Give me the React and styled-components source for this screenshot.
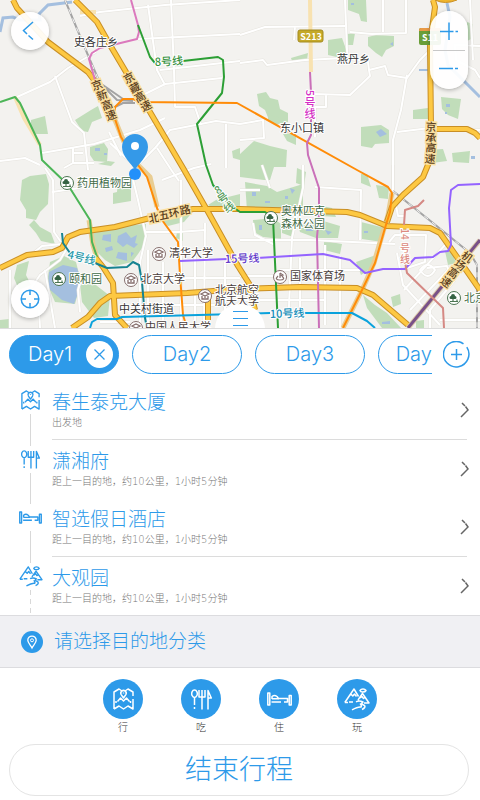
import styled, { createGlobalStyle } from 'styled-components'
import { useState } from 'react'

const GlobalStyle = createGlobalStyle`
    * {
        box-sizing: border-box;
    }
    body {
        margin: 0;
        background: #ffffff;
        font-family: Inter, 'Noto Sans CJK SC', sans-serif;
        font-weight: 300;
    }
    button {
        font: inherit;
        color: inherit;
        padding: 0;
        border: none;
        background: none;
        cursor: pointer;
    }
`

const blue = '#2d9ae9'

const Page = styled.main`
    display: flex;
    flex-direction: column;
    color: ${blue};
`

const MapArea = styled.section`
    position: relative;
    height: 329px;
    overflow: hidden;
    border-bottom: 1px solid #dcdcdc;
`

const MapSvg = styled.svg`
    display: block;
    width: 100%;
    height: 100%;
    font-family: 'Noto Sans CJK SC', sans-serif;
    font-weight: 400;
`

const RoundButton = styled.button`
    position: absolute;
    left: 11px;
    top: ${props => props.$low ? '280px' : '12px'};
    display: flex;
    align-items: center;
    justify-content: center;
    width: 38px;
    height: 38px;
    border-radius: 50%;
    background: rgba(255, 255, 255, 0.93);
    box-shadow: 0 1px 4px rgba(0, 0, 0, 0.3);
`

const ZoomControl = styled.div`
    position: absolute;
    right: 12px;
    top: 11px;
    display: flex;
    flex-direction: column;
    width: 38px;
    height: 78px;
    border-radius: 19px;
    background: rgba(255, 255, 255, 0.93);
    box-shadow: 0 1px 4px rgba(0, 0, 0, 0.3);
`

const ZoomButton = styled.button`
    flex: 1;
    display: flex;
    align-items: center;
    justify-content: center;
    margin: 0 3px;
    & + & {
        border-top: 1px solid #c8c8c8;
    }
`

const Handle = styled.button`
    position: absolute;
    left: 50%;
    bottom: -1px;
    transform: translateX(-50%);
    display: flex;
    flex-direction: column;
    align-items: center;
    gap: 6px;
    width: 50px;
    height: 25px;
    padding-top: 7px;
    border-radius: 25px 25px 0 0;
    background: #ffffff;
`

const HandleLine = styled.span`
    width: 15px;
    height: 1px;
    background: ${blue};
`

const DayBar = styled.nav`
    display: flex;
    align-items: center;
    gap: 11px;
    padding: 6px 10px 7px 9px;
`

const DayScroller = styled.div`
    display: flex;
    flex: 1;
    gap: 13px;
    min-width: 0;
    overflow: hidden;
`

const DayPill = styled.div`
    flex: none;
    display: flex;
    align-items: center;
    justify-content: space-between;
    width: 110px;
    height: 39px;
    padding: ${props => props.$active ? '0 5px 0 18px' : '0'};
    border: 1px solid ${blue};
    border-radius: 20px;
    background: ${props => props.$active ? blue : '#ffffff'};
    color: ${props => props.$active ? '#ffffff' : blue};
    &:nth-child(n + 4) {
        width: 84px;
    }
`

const DayButton = styled.button`
    flex: ${props => props.$active ? 'none' : '1'};
    font-size: 20px;
    line-height: 37px;
`

const CloseButton = styled.button`
    flex: none;
    display: flex;
    align-items: center;
    justify-content: center;
    width: 27px;
    height: 27px;
    border-radius: 50%;
    background: #ffffff;
    color: ${blue};
`

const AddButton = styled.button`
    display: flex;
`

const StopList = styled.ol`
    margin: 0;
    padding: 0 13px 0 9px;
    list-style: none;
`

const Stop = styled.li`
    display: flex;
`

const Rail = styled.div`
    display: flex;
    flex-direction: column;
    align-items: center;
    width: 43px;
    padding-top: 9px;
`

const RailIcon = styled.div`
    display: flex;
    align-items: center;
    justify-content: center;
    height: 20px;
`

const RailLine = styled.div`
    flex: 1;
    width: 1px;
    margin: 4px 0 ${props => props.$last ? '0' : '-6px'};
    background: ${props => props.$last
        ? 'repeating-linear-gradient(#d8d8d8 0 5px, transparent 5px 9px)'
        : '#d8d8d8'};
`

const StopBody = styled.a`
    flex: 1;
    display: flex;
    align-items: center;
    justify-content: space-between;
    height: ${props => props.$line ? '59px' : '58px'};
    border-bottom: ${props => props.$line ? '1px solid #dcdcdc' : 'none'};
    color: inherit;
    text-decoration: none;
`

const StopTitle = styled.div`
    font-size: 19px;
    line-height: 25px;
`

const StopNote = styled.div`
    font-family: 'DejaVu Sans', 'Noto Sans CJK SC', sans-serif;
    font-size: 10px;
    line-height: 16px;
    color: #777777;
`

const Chevron = styled.svg`
    flex: none;
    margin-right: -2px;
`

const PickBar = styled.div`
    display: flex;
    align-items: center;
    gap: 11px;
    height: 53px;
    padding: 0 21px;
    border-top: 1px solid #dcdcdf;
    border-bottom: 1px solid #dcdcdf;
    background: #f0f0f3;
`

const PickTitle = styled.h2`
    margin: 0;
    font-size: 19px;
    line-height: 25px;
    font-weight: 300;
`

const Categories = styled.div`
    display: flex;
    justify-content: center;
    gap: 38px;
    padding: 11px 0 9px;
`

const Category = styled.button`
    display: flex;
    flex-direction: column;
    align-items: center;
    font-size: 10px;
    line-height: 16px;
    color: #333333;
`

const CategoryIcon = styled.span`
    display: flex;
    align-items: center;
    justify-content: center;
    width: 40px;
    height: 40px;
    border-radius: 50%;
    background: ${blue};
    color: #ffffff;
`

const FinishButton = styled.button`
    height: 52px;
    margin: 0 11px 4px 9px;
    border: 1px solid #e4e4e4;
    border-radius: 26px;
    font-size: 27px;
    line-height: 50px;
`

const icons = {
    go: {
        w: 21, h: 22,
        d: 'M1 21V4L6 1l3 2M12 3l3-2 5 3v4M20 11v10l-5-3-4.500 3L6 18l-5 3M10.500 10L8.200 6.600a2.700 2.700 0 1 1 4.600 0zM10.500 4.600v1M4.500 13.500l3-3.500 3 3 3-3 3 3.500M3 13v2M17.500 13v2',
    },
    eat: {
        w: 21, h: 21,
        d: 'M3.500 1a2.800 3.700 0 1 0 .01 0M3.500 9v7M3.500 18v2M8 1v7h6V1M11 1v19.500M17 20.500V1.500L20.300 9H17',
    },
    stay: {
        w: 25, h: 14,
        d: 'M.8 1h2v12h-2zM22.200 3.500h2V13h-2zM5 7V4.500q2.500-2 5 0l1.500 2h9V10H17M5 6.800h7M4.500 10h9.500',
    },
    play: {
        w: 26, h: 23,
        d: 'M.8 14.500L10 1l4.500 7.500M.8 14.500H4M5 14h4M6.800 6l2 2L10.500 6l2 2.500M19 1q2 0 3 1.500-1 1.700-3.500 1.500-2 0-2.500-1.500Q17 1 19 1M14 12L18.500 5.500 25 15h-5M16 10l2-1.500 1.500 2 2-1.500M12 13.800q3-1.500 7 .2-3 1.500 1.500 3.500 1.500 2-2.500 4M16 15.500q2 2 1 3.500-3-.5-9 2.800',
    },
}

const TravelIcon = ({name, small}) => {
    const { w, h, d } = icons[name]
    const scale = small ? 0.92 : 1
    return <svg width={Math.round(w * scale)} height={Math.round(h * scale)} viewBox={`0 0 ${w} ${h}`} fill="none"
        stroke="currentColor" strokeWidth="1.500" strokeLinejoin="round" aria-hidden="true">
        <path d={d}/>
    </svg>
}

const parks = [
    'M31 120l14-4 3 18-14 0-3-8z',
    'M75 120l16-10 7-4 4 12-10 4-4 10-6-1z',
    'M90 147l14-4 4 6-1 13-13-1-4-6z',
    'M98 164l10-3 7 1-4 4z',
    'M232 151l8-3v12l-7-2z',
    'M22 180l8-4 16-2 3 10-1 20-8 8-4 8-10-2 0-8-6-10z',
    'M29 225l5-5 6 7 11 6 4 11-14-3-5-8z',
    'M118 180l6 8 7-2 0 15-18 3 0-11 4-1z',
    'M92 232l28-6 26-2 0 18-8 12-6 8-17 4-10-6-10-10z',
    'M17 265l12-4-3 14 5 10-12 5-5-12z',
    'M50 262l14-6 12 6 5 20-6 22-20-2-8-18z',
    'M80 285l12-3 18 14-2 20-14 2-12-16z',
    'M0 320l9-1v9H0z',
    'M160 219l14-8 16 4-6 7-16 4z',
    'M177 232l6-1 0 10-7-3z',
    'M208 205l8-5 24-6v18l-22-2z',
    'M348 0h18l1 22-6-1-2-7-11-4z',
    'M328 40l14-2 5 14-2 7-17-4z',
    'M347 34l8-1-2 12-5 0z',
    'M368 37l8-2 18 1 0 10-8 4-4 7-6-4-8-7z',
    'M291 58l17-5-1 7-15 1z',
    'M257 94l9-2 4 6 8 2 2 9 8 4v9l-13 3-6-5-4-10-6-4z',
    'M268 115l10 2 2 6-12-3z',
    'M361 127l20-2 8 5 0 13-14 1-3 4-11-2z',
    'M441 97l20 2-3 20-10-4-6-6z',
    'M413 110l15-2 0 11-15 0z',
    'M467 22l6 2v14l-6 3z',
    'M428 150l15-1 4 12-15 2z',
    'M452 153l18-2-1 12-16-1z',
    'M240 154l14-13 16 5 17 4-1 17-12 0-4 13-6 0-24-3z',
    'M283 134l13-1v12l-9-4z',
    'M245 182l22 4 10 6 26-8 0 24-9 6-14-4-10 2-23-1z',
    'M297 168l9 4-2 14-8-3z',
    'M361 174l6 0 4 13-10-4z',
    'M376 185l13 2-1 12-9-1z',
    'M322 206l10 2 4 9-14-1z',
    'M253 220l20-2 8 6 0 15-18-2-9-5z',
    'M282 217l12 4-1 16-11-4z',
    'M298 225l22-5 20 6-2 12-22 0-16-6z',
    'M361 222l24 6-3 14-20-3z',
    'M324 241l18 3-2 10-16-4z',
    'M356 262l20-7-3 12-12 8z',
    'M363 295l12 10 12 8 14 15H382l-15-20z',
    'M445 251l6-2 5 14-8 2z',
    'M391 297l9-3 1 10-8 3z',
    'M416 321l8-1v8h-8z',
]

const waters = [
    'M49 272l14-7 14 3 5 14-8 22-12-4-14-12z',
    'M103 235l8-1 0 8-9-2zM118 236l8-4 5 6 6-3-2 8 3 1-4 4-7-4-4 3-6-5zM105 248l7-2 1 4-7 2zM118 252l9 1 0 8-11-3zM131 252l3 1-3 4z',
    'M95 148h5v3h-5zM104 153h3v2h-3zM376 132l5-3 6 5-7 3zM390 44l3-2 0 4zM351 3h3v2h-3zM446 104h4v3h-4zM445 112h2v2h-2z',
    'M252 192h4v4h-4zM265 201h5v2h-5zM290 188l5 2-3 4zM285 196h3v3h-3zM306 229h7v2h-7zM325 230l7 2-4 3zM364 231h4v2h-4zM259 225h3v5h-3z',
    'M419 69h10v2h-10zM471 156h4v3h-4zM382 322l8-1v3h-8z',
]

const minorRoads = [
    'M80 16L100 12 165 5 240 0', 'M148 5L157 70 165 85', 'M171 0L174 70 175 107', 'M138 39L240 34', 'M160 70L240 61',
    'M17 97L50 82 68 68 96 52', 'M55 76L72 122 84 133 88 170', 'M143 95L165 84 222 78', 'M175 107h20l6 18',
    'M42 153L94 144 140 130 165 118', 'M110 143L125 157 138 167', 'M109 132L121 156', 'M73 148L73 163 64 168',
    'M0 161L25 158 40 165', 'M83 153h-10M72 163h22', 'M137 166L155 148 170 130 216 121 240 124', 'M157 148l15 23 7 10',
    'M226 124v44', 'M45 168L53 180 54 232 61 242', 'M162 180l32-12 17-4', 'M52 192l28-4', 'M131 171L138 200 146 236 140 262 140 328',
    'M146 232h32l28-2', 'M181 180v160', 'M205 223L204 328', 'M30 290L40 275 60 260 66 250', 'M27 258l15-12 20-2', 'M100 283L82 276 78 290 80 312',
    'M240 35L265 27 345 26M295 26l-1 14', 'M345 0L347 50 348 60', 'M383 0v32', 'M406 0v33L372 34 350 32', 'M240 63L263 60 267 65 305 60 345 58',
    'M345 58L368 62 369 70 385 66 388 75 407 78 420 60 430 50', 'M369 70L370 76 350 95 313 94M326 94v13h-11v30', 'M407 75L401 110 393 140 393 200',
    'M397 132L430 128 480 130', 'M240 124L263 120 264 138 240 140', 'M315 187L361 190 360 240', 'M303 165V188L292 238 288 328', 'M240 240L310 240 395 244',
    'M262 165L270 188M240 190l20 0', 'M253 223L255 235 275 245', 'M240 300L325 300M240 276h40M280 270h80', 'M300 258v70M340 256v72M325 245v80',
    'M389 242L395 235H426L425 262 404 269', 'M393 190V165M395 200L398 216 404 216', 'M397 253L403 285 440 325', 'M404 290L445 245', 'M410 310L450 268',
    'M420 270q8-10 15 0q-7 12-15 0zM427 268l20-2 6 15-16 12', 'M440 320h40', 'M455 280L430 310 430 328', 'M470 0L473 60M480 46L455 45 456 60 475 70 480 78',
    'M148 250v78M163 262V328M195 255V328M225 262V328', 'M145 278h95M150 305h86M100 322h30', 'M10 270V328M38 290l2 38M45 270l10 58',
]

const highways = [
    'M13 0L17 8 48 42 88 72 97 84 115 120',
    'M75 0L97 22 110 45 126 72 150 112 183 168 207 210 238 266 250 285',
    'M0 268L27 255 53 252 62 248 68 237 80 232 115 227 150 218 193 209 240 209 347 212 360 215 387 226 430 228 440 233 457 257 480 290',
    'M72 328L88 317 100 303 110 296 187 293 240 289 300 287 357 288 373 295 408 325',
    'M95 257L103 267 113 283 115 315 127 328', 'M208 293V320', 'M249 285L255 310',
    'M433 0L435 7 430 43 431 127 430 160 423 177 403 195 392 207 387 222',
    'M435 129H467L475 133 480 138',
]

const metro = [
    { c: '#db79bd', d: 'M131 0L138 25 139 32 137 39 100 48 92 53 89 59 95 80' },
    { c: '#2c9f35', d: 'M138 25L150 57 155 63M183 61L218 57 223 60 224 77 222 93 197 124 206 165 213 185 230 205 240 212 265 212 273 218 278 328' },
    { c: '#4cb557', d: 'M0 102L15 97 20 103 40 145 42 160 68 185 90 220 92 242 97 257' },
    { c: '#168391', d: 'M62 233L63 243 70 253M95 263L107 268 127 267 133 262 139 265 142 282 145 318 147 328' },
    { c: '#ff8c08', d: 'M115 119V107L123 99 133 99 140 102 237 103 357 170 388 187 392 193 390 212 385 228 375 263 363 288 343 328' },
    { c: '#ff8c08', d: 'M115 119L121 137 138 165 147 177 157 208 162 220 178 242 180 275 183 315 187 328' },
    { c: '#ca70b9', d: 'M310 72L311 92M311 119L311 135 307 143 308 155 319 188 319 215 317 237 319 328' },
    { c: '#9463ff', d: 'M180 261L227 259M257 258L323 254 350 260 365 273 383 269 405 269 415 258 433 257 440 252 448 251 451 245 449 208 451 190 458 185 480 184' },
    { c: '#0aa2dc', d: 'M90 328L92 322 97 319 117 319 122 317 270 313M303 313H352L367 321 375 328' },
    { c: '#d58984', d: 'M424 200L418 206 405 210 404 225M405 262L407 273 443 308 444 328' },
]

const Place = ({x, y, fill = '#333333', size = 11, children, ...rest}) => (
    <text x={x} y={y} fontSize={size} fill={fill} stroke="#ffffff" strokeWidth="2" paintOrder="stroke" strokeLinejoin="round" {...rest}>{children}</text>
)

// one glyph per point, turned to follow the road
const RoadName = ({chars, turn, fill = '#5b4020', back = '#fbe0a0', size = 11}) => chars.map(([c, x, y, own = turn], i) => (
    <g key={i} transform={`rotate(${own} ${x} ${y})`}>
        {back !== 'none' && <rect x={x - 6} y={y - 6} width="12" height="12" fill={back}/>}
        <text x={x} y={y + 4} fontSize={size} fontWeight="500" textAnchor="middle" fill={fill}
            stroke={back === 'none' ? '#ffffff' : 'none'} strokeWidth="2" paintOrder="stroke">{c}</text>
    </g>
))

const Poi = ({x, y, kind}) => (
    <g transform={`translate(${x} ${y})`} stroke={kind === 'park' ? '#4c7552' : '#866f6d'} fill="#ffffff">
        <circle r="6.500" strokeWidth="1"/>
        {kind === 'park' && <path d="M-1 3V0M-4 3.500H4M3 3.500v-2" strokeWidth="1.200"/>}
        {kind === 'park' && <path d="M-1-4a2 2 0 0 1 2 2 1.500 1.500 0 0 1 0 3h-4a1.500 1.500 0 0 1 0-3 2 2 0 0 1 2-2z" fill="#356344" stroke="none"/>}
        {kind === 'school' && <path d="M-4-2L0-4 4-2 0 0zM-3 0v3h6V0M0 0v2" fill="none" strokeWidth="1.300"/>}
        {kind === 'sport' && <path d="M0-4v5M0-4l3 2-3 1M-2-1q-4 4 2 4t2-4" fill="none" strokeWidth="1.200"/>}
    </g>
)

const CityMap = () => (
    <MapSvg viewBox="0 0 480 328" preserveAspectRatio="xMidYMid slice" role="img" aria-label="地图">
        <rect width="480" height="328" fill="#f3f2ef"/>
        <g fill="#c1ddba">{parks.map((d, i) => <path key={i} d={d}/>)}</g>
        <g fill="#a4bfdf">{waters.map((d, i) => <path key={i} d={d}/>)}</g>
        <g fill="none" stroke="#a4bfdf" strokeWidth="3">
            <path d="M0 32L3 18 13 17 20 20 40 20 39 14 48 5 72 2"/>
            <path d="M447 3L450 17 445 50 448 65 480 97"/>
        </g>
        <g fill="none" strokeLinejoin="round">
            <g stroke="#e6e4de" strokeWidth="3">{minorRoads.map((d, i) => <path key={i} d={d}/>)}</g>
            <g stroke="#ffffff" strokeWidth="2">{minorRoads.map((d, i) => <path key={i} d={d}/>)}</g>
            <path d="M65 0L90 60 100 83 123 99M105 88L117 100 133 101M115 107l8-4 12 0M393 191L433 223 470 253 477 265V328" stroke="#a3a3a3" strokeWidth="2"/>
            <path d="M65 0L90 60 100 83M393 191L433 223 470 253 477 265V328" stroke="#f4f4f4" strokeWidth="1" strokeDasharray="5 5"/>
            <path d="M15 97L24 118 40 145M80 12H96M310 0L311 72" stroke="#f8e2b0" strokeWidth="4"/>
            <path d="M115 120L124 142M138 165L150 177 157 207M392 193L388 215 374 263 363 288 343 328M89 220L93 245 97 258" stroke="#e9cd92" strokeWidth="5"/>
            <g stroke="#c98f25" strokeWidth="6">{highways.map((d, i) => <path key={i} d={d}/>)}</g>
            <g stroke="#fdc842" strokeWidth="4">{highways.map((d, i) => <path key={i} d={d}/>)}</g>
            <path d="M480 240L408 328" stroke="#dcc9a8" strokeWidth="5"/>
            <path d="M480 240L408 328" stroke="#795188" strokeWidth="3"/>
            {metro.map(({c, d}, i) => <path key={i} d={d} stroke={c} strokeWidth="2"/>)}
        </g>
        <path d="M435 0q10 5 22 0" fill="#efb52f" stroke="#c98f25"/>

        <Place x="74" y="46">史各庄乡</Place>
        <Place x="337" y="63">燕丹乡</Place>
        <Place x="280" y="132">东小口镇</Place>
        <Place x="77" y="187" fill="#3f6b47">药用植物园</Place>
        <Place x="281" y="215" fill="#3f6b47">奥林匹克</Place>
        <Place x="281" y="228" fill="#3f6b47">森林公园</Place>
        <Place x="169" y="257" fill="#493d3b">清华大学</Place>
        <Place x="141" y="283" fill="#493d3b">北京大学</Place>
        <Place x="69" y="283" fill="#3f6b47">颐和园</Place>
        <Place x="290" y="280" fill="#493d3b">国家体育场</Place>
        <Place x="215" y="294" fill="#493d3b">北京航空</Place>
        <Place x="215" y="305" fill="#493d3b">航天大学</Place>
        <Place x="119" y="313">中关村街道</Place>
        <Place x="145" y="331" fill="#493d3b">中国人民大学</Place>
        <Place x="464" y="302" fill="#3f6b47">北京</Place>

        <Place x="155" y="66" fill="#38923f" fontWeight="500" transform="rotate(-3 155 66)">8号线</Place>
        <Place x="67" y="258" fill="#289aac" fontWeight="500" transform="rotate(14 67 258)">4号线</Place>
        <Place x="225" y="263" fill="#6137c8" fontWeight="500" transform="rotate(-2 225 263)">15号线</Place>
        <Place x="270" y="318" fill="#138db8" fontWeight="500" transform="rotate(-2 270 318)">10号线</Place>

        <RoadName chars={[['京', 97, 85], ['新', 102, 95], ['高', 107, 105], ['速', 111, 115]]} turn={-20}/>
        <RoadName chars={[['京', 129, 78], ['藏', 135, 88], ['高', 140, 97], ['速', 146, 106]]} turn={-28}/>
        <RoadName chars={[['京', 431, 127], ['承', 431, 138], ['高', 431, 148], ['速', 430, 159]]} turn={4}/>
        <RoadName chars={[['机', 467, 257], ['场', 460, 265], ['高', 453, 273], ['速', 446, 282]]} turn={36}/>
        <RoadName chars={[['北', 154, 218], ['五', 164, 215], ['环', 174, 213], ['路', 185, 210]]} turn={-12}/>
        <RoadName chars={[['5', 310, 93, 90], ['号', 310, 103], ['线', 310, 114]]} turn={0} fill="#d52fc5" back="none"/>
        <RoadName chars={[['8', 218, 190], ['号', 223, 198], ['线', 229, 207]]} turn={-35} fill="#559b5b" back="none"/>
        <RoadName chars={[['14', 405, 234, 90], ['号', 405, 248], ['线', 405, 259]]} turn={0} fill="#dc8a80" back="none" size={10}/>

        <rect x="298" y="30" width="25" height="12" rx="2" fill="#c5a928" stroke="#a48b20"/>
        <text x="311" y="40" fontSize="9" fontWeight="700" textAnchor="middle" fill="#ffffff">S213</text>
        <rect x="419" y="28" width="22" height="17" rx="2" fill="#6a9e38"/>
        <path d="M419 31v-1q0-2 2-2h18q2 0 2 2v1z" fill="#e99a46"/>
        <text x="430" y="41" fontSize="9" fontWeight="700" textAnchor="middle" fill="#ffffff">S11</text>

        <Poi x={67} y={183} kind="park"/>
        <Poi x={59} y={279} kind="park"/>
        <Poi x={271} y={218} kind="park"/>
        <Poi x={454} y={298} kind="park"/>
        <Poi x={159} y={254} kind="school"/>
        <Poi x={131} y={280} kind="school"/>
        <Poi x={205} y={296} kind="school"/>
        <Poi x={136} y={328} kind="school"/>
        <Poi x={280} y={277} kind="sport"/>

        <circle cx="135" cy="174" r="6" fill="#2390fa"/>
        <path d="M135 170C132 164 122 157 122 147a13 13 0 1 1 26 0C148 157 138 164 135 170z" fill="#3499e8"/>
        <circle cx="135" cy="146" r="4" fill="#ffffff"/>
    </MapSvg>
)

const stops = [
    { icon: 'go', title: '春生泰克大厦', note: '出发地', line: true },
    { icon: 'eat', title: '潇湘府', note: '距上一目的地，约10公里，1小时5分钟' },
    { icon: 'stay', title: '智选假日酒店', note: '距上一目的地，约10公里，1小时5分钟', line: true },
    { icon: 'play', title: '大观园', note: '距上一目的地，约10公里，1小时5分钟' },
]

const categories = [
    { icon: 'go', label: '行' },
    { icon: 'eat', label: '吃' },
    { icon: 'stay', label: '住' },
    { icon: 'play', label: '玩' },
]

const App = () => {
    const [days, setDays] = useState([1, 2, 3, 4])
    const [active, setActive] = useState(1)

    const removeDay = (day) => {
        const rest = days.filter(d => d !== day)
        setDays(rest)
        setActive(rest[0])
    }

    return <Page>
        <GlobalStyle/>
        <MapArea>
            <CityMap/>
            <RoundButton aria-label="返回">
                <svg width="16" height="20" viewBox="0 0 16 20" fill="none" stroke={blue} strokeWidth="1.500">
                    <path d="M11 1L1.500 9.500 5 13M6.500 14.500l4.500 4"/>
                </svg>
            </RoundButton>
            <RoundButton $low aria-label="定位">
                <svg width="20" height="20" viewBox="0 0 20 20" fill="none" stroke={blue} strokeWidth="1.500">
                    <circle cx="10" cy="10" r="8.800"/>
                    <path d="M10 1v5M10 14v5M1 10h5M14 10h5"/>
                </svg>
            </RoundButton>
            <ZoomControl>
                <ZoomButton aria-label="放大">
                    <svg width="20" height="20" viewBox="0 0 20 20" fill="none" stroke={blue} strokeWidth="1.500">
                        <path d="M1 11.500h13.500M16.500 11.500h2.500M10 2.500v18"/>
                    </svg>
                </ZoomButton>
                <ZoomButton aria-label="缩小">
                    <svg width="20" height="20" viewBox="0 0 20 20" fill="none" stroke={blue} strokeWidth="1.500">
                        <path d="M0 8.500h14M16 8.500h3"/>
                    </svg>
                </ZoomButton>
            </ZoomControl>
            <Handle aria-label="展开">
                <HandleLine/>
                <HandleLine/>
                <HandleLine/>
            </Handle>
        </MapArea>

        <DayBar>
            <DayScroller>
                {days.map(day => <DayPill key={day} $active={day === active}>
                    <DayButton $active={day === active} onClick={() => setActive(day)}>Day{day}</DayButton>
                    {day === active && <CloseButton aria-label="删除" onClick={() => removeDay(day)}>
                        <svg width="11" height="11" viewBox="0 0 11 11" fill="none" stroke="currentColor" strokeWidth="1.300">
                            <path d="M.5.5l10 10M10.500.5l-10 10"/>
                        </svg>
                    </CloseButton>}
                </DayPill>)}
            </DayScroller>
            <AddButton aria-label="添加" onClick={() => setDays([...days, Math.max(0, ...days) + 1])}>
                <svg width="27" height="27" viewBox="0 0 27 27" fill="none" stroke={blue} strokeWidth="1.500">
                    <path d="M20.500 2.800A12.700 12.700 0 1 0 23.800 6.200M13.500 8v11M8 13.500h11"/>
                </svg>
            </AddButton>
        </DayBar>

        <StopList>
            {stops.map((stop, index) => <Stop key={index}>
                <Rail>
                    <RailIcon><TravelIcon name={stop.icon} small/></RailIcon>
                    <RailLine $last={index === stops.length - 1}/>
                </Rail>
                <StopBody href="#" $line={stop.line}>
                    <div>
                        <StopTitle>{stop.title}</StopTitle>
                        <StopNote>{stop.note}</StopNote>
                    </div>
                    <Chevron width="9" height="16" viewBox="0 0 9 16" fill="none" stroke="#666666" strokeWidth="1.500" aria-hidden="true">
                        <path d="M2 1l3 3M5.500 4.500L8 8l-7 7"/>
                    </Chevron>
                </StopBody>
            </Stop>)}
        </StopList>

        <PickBar>
            <svg width="22" height="22" viewBox="0 0 22 22" fill="none" aria-hidden="true">
                <circle cx="11" cy="11" r="11" fill={blue}/>
                <path d="M11 17C9.500 14 6.800 12 6.800 9.300a4.200 4.200 0 1 1 8.400 0C15.200 12 12.500 14 11 17z" stroke="#ffffff" strokeWidth="1.300"/>
                <circle cx="11" cy="9.300" r="1.500" stroke="#ffffff"/>
            </svg>
            <PickTitle>请选择目的地分类</PickTitle>
        </PickBar>

        <Categories>
            {categories.map(item => <Category key={item.icon}>
                <CategoryIcon><TravelIcon name={item.icon}/></CategoryIcon>
                {item.label}
            </Category>)}
        </Categories>
        <FinishButton>结束行程</FinishButton>
    </Page>
}

export default App
